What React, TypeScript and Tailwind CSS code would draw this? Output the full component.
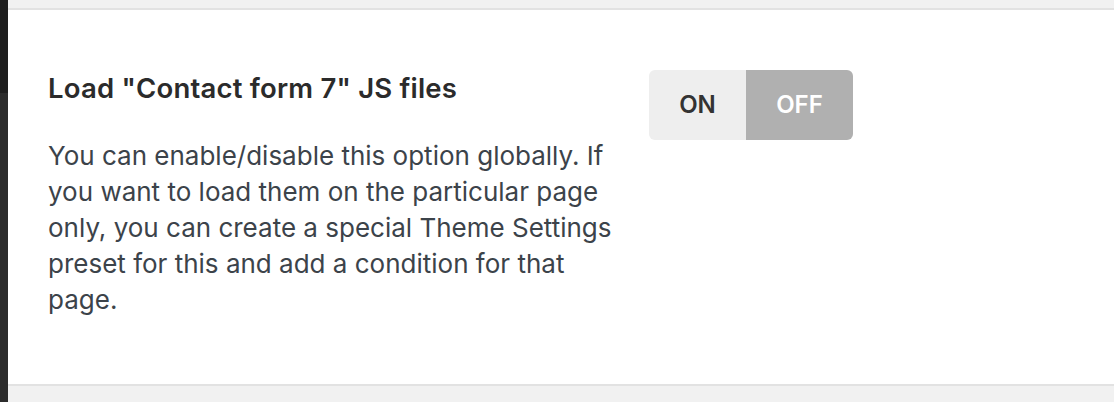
import React from "react";

export default function App() {
  return (
    <div className="w-[1114px] h-[402px] bg-[#f1f1f1] flex overflow-hidden" style={{ fontFamily: "Inter, 'Noto Sans', sans-serif" }}>
      <div className="w-[8px] h-full flex flex-col shrink-0">
        <div className="h-[93px] bg-[#1e1e1e]" />
        <div className="flex-1 bg-[#2c2c2c]" />
      </div>
      <div className="flex-1 flex flex-col">
        <div className="h-[8px] bg-[#f1f1f1] border-b-2 border-[#e2e2e2] box-content" />
        <div className="h-[376px] bg-white border-b-2 border-[#e2e2e2] flex items-start pl-[40px] pt-[60px]">
          <div className="w-[585px]">
            <h2 className="text-[27.5px] leading-[36px] font-semibold text-[#2b2b2b] tracking-[0.2px]">Load "Contact form 7" JS files</h2>
            <p className="mt-[32px] text-[26px] leading-[36px] text-[#3c434a]">
              You can enable/disable this option globally. If you want to load them on the particular page only, you can create a special Theme Settings preset for this and add a condition for that page.
            </p>
          </div>
          <div className="ml-[16px] mt-[0px] flex h-[70px] w-[204px] rounded-[6px] overflow-hidden text-[24px] font-semibold">
            <div className="w-[97px] bg-[#eeeeee] text-[#333333] flex items-center justify-center">ON</div>
            <div className="flex-1 bg-[#b0b0b0] text-white flex items-center justify-center">OFF</div>
          </div>
        </div>
        <div className="flex-1 bg-[#f1f1f1]" />
      </div>
    </div>
  );
}
